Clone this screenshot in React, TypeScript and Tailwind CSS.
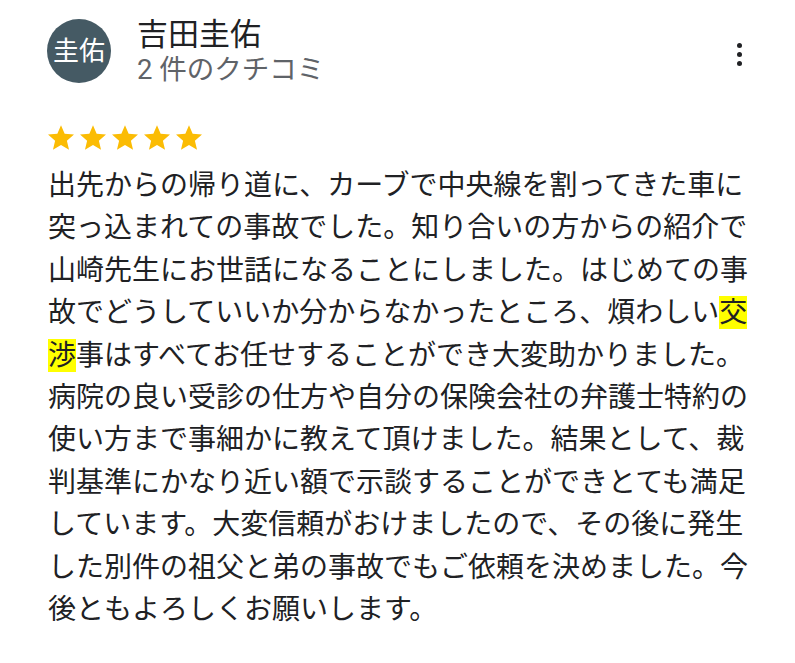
import React from 'react'

const font = { fontFamily: 'Roboto, "Noto Sans CJK JP", sans-serif' }

function Star() {
  return (
    <svg width="26" height="25" viewBox="2 2 20 19" className="shrink-0">
      <path
        fill="#fbbc04"
        d="M12 17.27 18.18 21l-1.64-7.03L22 9.24l-7.19-.61L12 2 9.19 8.63 2 9.24l5.46 4.73L5.82 21z"
      />
    </svg>
  )
}

export default function App() {
  return (
    <div className="w-[795px] h-[663px] bg-white overflow-hidden" style={font}>
      {/* Header */}
      <div className="flex items-start pl-[47px] pr-[53px] pt-[19px]">
        <div className="w-[64px] h-[64px] rounded-full bg-[#455a64] flex items-center justify-center text-white text-[26px] shrink-0">
          圭佑
        </div>
        <div className="ml-[26px] flex-1 -mt-[2px]">
          <div className="text-[31px] leading-[36px] text-[#202124]">吉田圭佑</div>
          <div className="text-[27.5px] leading-[34px] text-[#5f6368]">2 件のクチコミ</div>
        </div>
        <div className="flex flex-col items-center gap-[4px] mt-[24px]">
          <span className="w-[5px] h-[5px] rounded-full bg-[#202124]" />
          <span className="w-[5px] h-[5px] rounded-full bg-[#202124]" />
          <span className="w-[5px] h-[5px] rounded-full bg-[#202124]" />
        </div>
      </div>

      {/* Stars */}
      <div className="flex gap-[6px] pl-[48px] mt-[38px]">
        <Star />
        <Star />
        <Star />
        <Star />
        <Star />
      </div>

      {/* Body */}
      <p className="ml-[48px] mt-[15px] w-[701px] text-[28px] leading-[42.4px] text-[#202124]">
        出先からの帰り道に、カーブで中央線を割ってきた車に突っ込まれての事故でした。知り合いの方からの紹介で山崎先生にお世話になることにしました。はじめての事故でどうしていいか分からなかったところ、煩わしい
        <span className="bg-[#ffff00]">交</span>
        <span className="bg-[#ffff00]">渉</span>
        事はすべてお任せすることができ大変助かりました。病院の良い受診の仕方や自分の保険会社の弁護士特約の使い方まで事細かに教えて頂けました。結果として、裁判基準にかなり近い額で示談することができとても満足しています。大変信頼がおけましたので、その後に発生した別件の祖父と弟の事故でもご依頼を決めました。今後ともよろしくお願いします。
      </p>
    </div>
  )
}
